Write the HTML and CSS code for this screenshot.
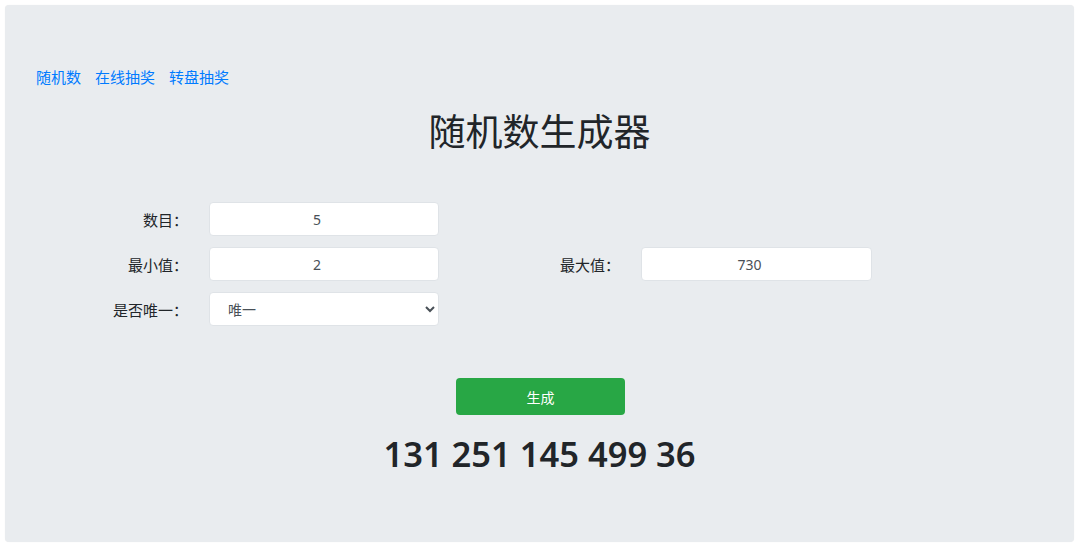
FILE: index.html
```html
<!DOCTYPE html>
<html lang="zh-CN">

<head>
    <meta charset="UTF-8">
    <title>随机数生成器</title>
    <link rel="stylesheet" href="styles.css">
</head>

<body>
    <div class="jumbotron">
        <nav class="links">
            <a href="#">随机数</a>
            <a href="#">在线抽奖</a>
            <a href="#">转盘抽奖</a>
        </nav>
        <h1 class="title">随机数生成器</h1>
        <form class="gen-form">
            <label class="form-label" for="count">数目：</label>
            <input class="form-input" id="count" type="text" value="5">
            <span></span>
            <span></span>

            <label class="form-label" for="min">最小值：</label>
            <input class="form-input" id="min" type="text" value="2">
            <label class="form-label" for="max">最大值：</label>
            <input class="form-input" id="max" type="text" value="730">

            <label class="form-label" for="unique">是否唯一：</label>
            <select class="form-input form-select" id="unique">
                <option value="1" selected>唯一</option>
                <option value="0">不唯一</option>
            </select>
        </form>
        <div class="actions">
            <button type="button" class="btn-generate">生成</button>
        </div>
        <div class="result">131 251 145 499 36</div>
    </div>
</body>

</html>
```

FILE: styles.css
```css
body {
    margin: 0;
    padding: 5px 6px 4px 5px;
    background-color: #fff;
    font-family: "Noto Sans", "Noto Sans CJK SC", sans-serif;
    color: #212529;
}

.jumbotron {
    background-color: #e9ecef;
    border-radius: 4px;
    height: 537px;
    box-sizing: border-box;
    padding: 62px 0 0 31px;
    box-shadow: 0 0 1px rgba(0, 0, 0, 0.08);
}

.links {
    display: flex;
    gap: 14px;
    font-size: 15px;
    line-height: 21px;
}

.links a {
    color: #007bff;
    text-decoration: none;
}

.title {
    margin: 21px 31px 0 0;
    font-size: 37px;
    font-weight: 400;
    line-height: 46px;
    text-align: center;
}

.gen-form {
    display: grid;
    grid-template-columns: 160px 230px 160px 231px;
    grid-auto-rows: 34px;
    column-gap: 21px;
    row-gap: 11px;
    margin: 47px 0 0 -8px;
}

.form-label {
    align-self: center;
    text-align: right;
    font-size: 15px;
    color: #212529;
}

.form-input {
    box-sizing: border-box;
    height: 34px;
    padding: 0 20px 0 6px;
    border: 1px solid #dfe3e7;
    border-radius: 4px;
    background-color: #fff;
    font-family: inherit;
    font-size: 14px;
    color: #495057;
    text-align: center;
    outline: none;
}

.form-select {
    text-align: left;
    padding: 0 6px 0 14px;
}

.actions {
    display: flex;
    justify-content: center;
    margin: 52px 29px 0 0;
}

.btn-generate {
    width: 169px;
    height: 37px;
    border: none;
    border-radius: 4px;
    background-color: #28a745;
    color: #fff;
    font-family: inherit;
    font-size: 14px;
    cursor: pointer;
}

.result {
    margin: 17px 31px 0 0;
    text-align: center;
    font-size: 34.5px;
    font-weight: 600;
    line-height: 44px;
}
```
